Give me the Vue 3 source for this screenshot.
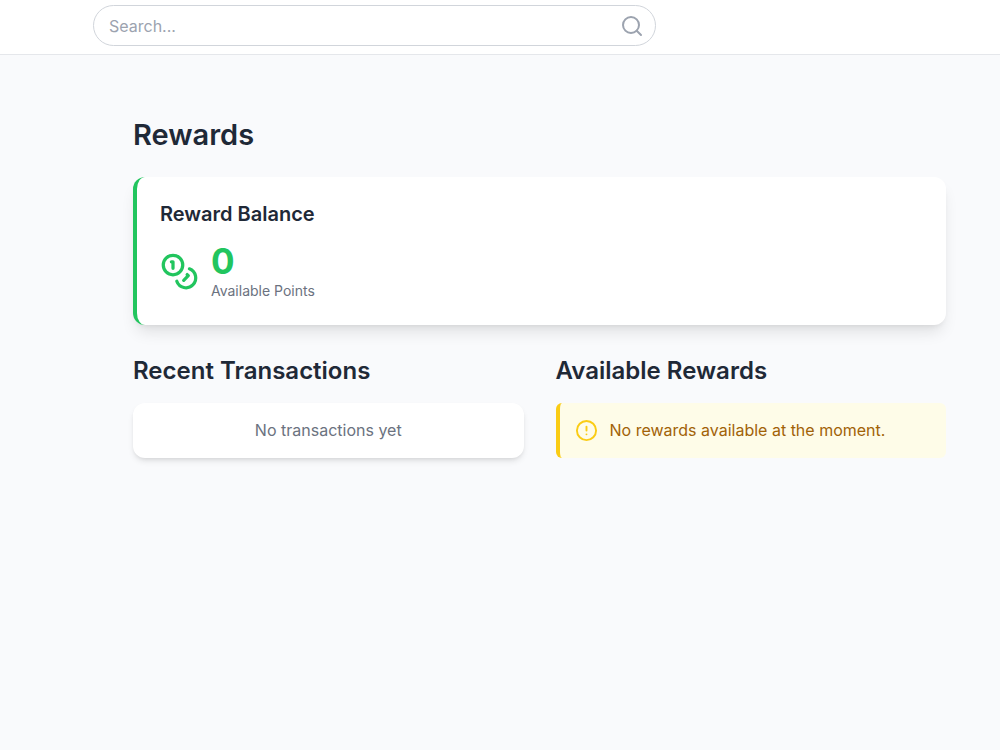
<script setup>
import { ref } from 'vue'

const query = ref('')
const points = ref(0)
</script>

<template>
  <div class="page">
    <header class="topbar">
      <form class="search" role="search" @submit.prevent>
        <input v-model="query" class="search-input" type="text" placeholder="Search..." aria-label="Search" />
        <button class="search-button" type="submit" aria-label="Submit search">
          <svg class="icon-search" viewBox="0 0 24 24" aria-hidden="true">
            <circle cx="11" cy="11" r="8" />
            <path d="m21 21-4.3-4.3" />
          </svg>
        </button>
      </form>
    </header>

    <main class="content">
      <h1 class="title">Rewards</h1>

      <section class="balance">
        <h2 class="balance-title">Reward Balance</h2>
        <div class="balance-row">
          <svg class="icon-coins" viewBox="0 0 24 24" aria-hidden="true">
            <circle cx="8" cy="8" r="6" />
            <path d="M18.09 10.37A6 6 0 1 1 10.34 18" />
            <path d="M7 6h1v4" />
            <path d="m16.71 13.88.7.71-2.82 2.82" />
          </svg>
          <div>
            <p class="points">{{ points }}</p>
            <p class="points-label">Available Points</p>
          </div>
        </div>
      </section>

      <div class="columns">
        <section>
          <h2 class="section-title">Recent Transactions</h2>
          <div class="empty">No transactions yet</div>
        </section>
        <section>
          <h2 class="section-title">Available Rewards</h2>
          <div class="notice">
            <svg class="icon-alert" viewBox="0 0 24 24" aria-hidden="true">
              <circle cx="12" cy="12" r="10" />
              <path d="M12 8v4" />
              <path d="M12 16h.01" />
            </svg>
            <p class="notice-text">No rewards available at the moment.</p>
          </div>
        </section>
      </div>
    </main>
  </div>
</template>

<style>
body {
  margin: 0;
  background: #f9fafc;
}
</style>

<style scoped>
.page {
  min-height: 100vh;
  background: #f9fafc;
  color: #1f2937;
  font-family: Inter, "Liberation Sans", sans-serif;
  font-size: 16px;
  line-height: 23px;
}
.page * {
  box-sizing: border-box;
}
h1, h2, p {
  margin: 0;
}
svg {
  display: block;
  flex: none;
  fill: none;
  stroke: currentColor;
  stroke-width: 2;
  stroke-linecap: round;
  stroke-linejoin: round;
}
.topbar {
  padding: 5px 93px 8px;
  background: #fff;
  border-bottom: 1px solid #e5e7eb;
}
.search {
  display: flex;
  align-items: center;
  max-width: 563px;
  padding: 0 11px 0 15px;
  background: #fff;
  border: 1px solid #d1d5db;
  border-radius: 24px;
}
.search-input {
  flex: 1;
  min-width: 0;
  height: 39px;
  padding: 0;
  border: 0;
  outline: 0;
  background: transparent;
  color: #1f2937;
  font: inherit;
}
.search-input::placeholder {
  color: #9ca3af;
  opacity: 1;
}
.search-button {
  padding: 0;
  border: 0;
  background: transparent;
  color: #9ca3af;
  cursor: pointer;
}
.icon-search {
  width: 24px;
  height: 24px;
}
.content {
  padding: 60px 54px 32px 133px;
}
.title {
  margin-bottom: 22px;
  font-size: 29px;
  line-height: 40px;
  font-weight: 600;
}
.balance {
  margin-bottom: 30px;
  padding: 23px 23px 24px;
  background: #fff;
  border-left: 4px solid #22c55e;
  border-radius: 12px;
  box-shadow: 0 10px 15px -3px rgba(0, 0, 0, 0.1), 0 4px 6px -4px rgba(0, 0, 0, 0.1);
}
.balance-title {
  margin-bottom: 14px;
  font-size: 20px;
  line-height: 28px;
  font-weight: 600;
}
.balance-row {
  display: flex;
  align-items: center;
  gap: 12px;
}
.icon-coins {
  width: 39px;
  height: 39px;
  color: #22c55e;
}
.points {
  color: #22c55e;
  font-size: 35px;
  line-height: 39px;
  font-weight: 700;
}
.points-label {
  color: #6b7280;
  font-size: 14px;
  line-height: 20px;
}
.columns {
  display: grid;
  grid-template-columns: 1fr 1fr;
  gap: 32px;
}
.section-title {
  margin-bottom: 16px;
  font-size: 24px;
  line-height: 32px;
  font-weight: 600;
}
.empty {
  padding: 16px;
  background: #fff;
  border-radius: 12px;
  box-shadow: 0 4px 6px -1px rgba(0, 0, 0, 0.1), 0 2px 4px -2px rgba(0, 0, 0, 0.1);
  color: #6b7280;
  text-align: center;
}
.notice {
  display: flex;
  align-items: center;
  gap: 12px;
  padding: 16px 15px;
  background: #fefce8;
  border-left: 4px solid #facc15;
  border-radius: 6px;
}
.icon-alert {
  width: 23px;
  height: 23px;
  color: #facc15;
}
.notice-text {
  color: #a16207;
}
</style>
